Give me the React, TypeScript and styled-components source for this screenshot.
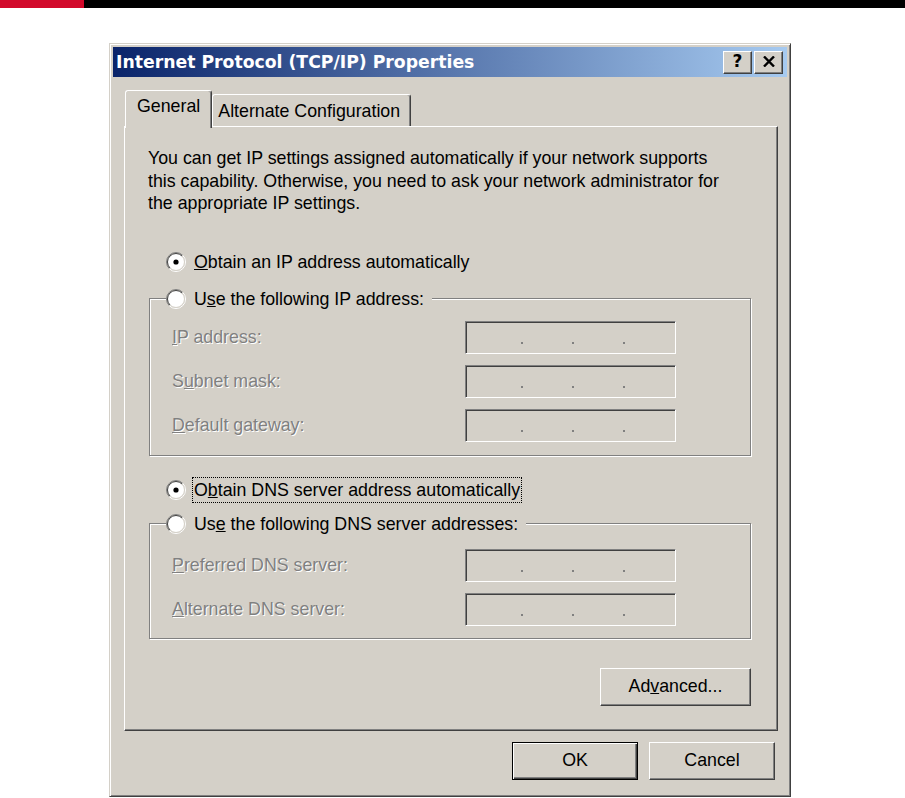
import React from "react";
import styled, { createGlobalStyle, css } from "styled-components";

const FACE = "#d4d0c8";
const SHADOW = "#808080";
const DARK = "#404040";

const GlobalStyle = createGlobalStyle`
  html, body { margin: 0; padding: 0; background: #fff; }
  body { font-family: "Liberation Sans", Arial, sans-serif; }
  * { box-sizing: border-box; }
`;

const raised = css`
  border: 1px solid;
  border-color: #fff ${DARK} ${DARK} #fff;
  box-shadow: inset -1px -1px 0 ${SHADOW};
`;

const Page = styled.div`
  width: 905px;
  height: 798px;
  overflow: hidden;
  background: #fff;
`;

const TopBar = styled.div`
  display: flex;
  height: 8px;
`;

const TopBarAccent = styled.div`
  width: 84px;
  background: #d20a2b;
`;

const TopBarRest = styled.div`
  flex: 1;
  background: #000;
`;

const Stage = styled.div`
  padding: 35px 0 0 109px;
`;

const Dialog = styled.div`
  width: 682px;
  background: ${FACE};
  border: 1px solid;
  border-color: ${FACE} ${DARK} ${DARK} ${FACE};
  box-shadow: inset 1px 1px 0 #fff, inset -1px -1px 0 ${SHADOW};
  padding: 3px;
`;

const TitleBar = styled.div`
  display: flex;
  align-items: center;
  height: 30px;
  padding: 0 4px 0 3px;
  background: linear-gradient(to right, #0a246a, #a6caf0);
`;

const TitleText = styled.div`
  flex: 1;
  font-family: "DejaVu Sans", Verdana, sans-serif;
  font-weight: bold;
  font-size: 17.25px;
  color: #fff;
  white-space: nowrap;
`;

const TitleButtons = styled.div`
  display: flex;
  gap: 2px;
`;

const CaptionButton = styled.div`
  ${raised};
  width: 29px;
  height: 23px;
  background: ${FACE};
  display: flex;
  align-items: center;
  justify-content: center;
  font-family: "DejaVu Sans", Verdana, sans-serif;
  font-weight: bold;
  font-size: 17px;
  line-height: 1;
  color: #000;
  padding-bottom: 1px;
`;

const Body = styled.div`
  padding: 13px 9px 0 11px;
`;

const TabStrip = styled.div`
  display: flex;
  align-items: flex-end;
  height: 36px;
  padding-left: 1px;
  position: relative;
  z-index: 1;
`;

const Tab = styled.div<{ $active?: boolean }>`
  border: 1px solid;
  border-bottom: none;
  border-color: #fff ${DARK} transparent #fff;
  box-shadow: inset -1px 0 0 ${SHADOW};
  border-radius: 3px 3px 0 0;
  background: ${FACE};
  font-size: 17.8px;
  line-height: 24px;
  color: #000;
  white-space: nowrap;
  height: ${(p) => (p.$active ? 38 : 32)}px;
  padding: ${(p) => (p.$active ? "3px 11px 0 11px" : "4px 10px 0 5px")};
  margin-bottom: ${(p) => (p.$active ? -2 : 0)}px;
  position: relative;
  z-index: ${(p) => (p.$active ? 2 : 1)};
`;

const Panel = styled.div`
  ${raised};
  padding: 20px 26px 24px 23px;
  display: flex;
  flex-direction: column;
`;

const Intro = styled.p`
  margin: 0;
  font-size: 17.8px;
  line-height: 22.5px;
  color: #000;
  white-space: nowrap;
`;

const OptionRow = styled.div<{ $top: number }>`
  display: flex;
  align-items: center;
  height: 24px;
  margin: ${(p) => p.$top}px 0 0 18px;
`;

const OptionLabel = styled.span<{ $focused?: boolean }>`
  font-size: 17.8px;
  line-height: 24px;
  color: #000;
  white-space: nowrap;
  padding: 0 1px;
  margin-left: 6px;
  border: 1px dotted ${(p) => (p.$focused ? "#000" : "transparent")};
`;

const Group = styled.div<{ $top: number; $bottom: number }>`
  display: flex;
  flex-direction: column;
  margin: ${(p) => p.$top}px 0 0 1px;
  padding: 0 74px ${(p) => p.$bottom}px 22px;
  border: 1px solid ${SHADOW};
  box-shadow: 1px 1px 0 #fff, inset 1px 1px 0 #fff;
`;

const Legend = styled.div`
  display: flex;
  align-items: center;
  align-self: flex-start;
  height: 24px;
  margin: -12px 0 0 -6px;
  padding-right: 6px;
  background: ${FACE};
`;

const Fields = styled.div<{ $top: number }>`
  display: flex;
  flex-direction: column;
  gap: 11px;
  margin-top: ${(p) => p.$top}px;
`;

const FieldRow = styled.div`
  display: flex;
  align-items: center;
  height: 33px;
`;

const FieldLabel = styled.span`
  flex: 1;
  font-size: 17.8px;
  color: ${SHADOW};
  text-shadow: 1px 1px 0 #fff;
  white-space: nowrap;
`;

const IpBox = styled.div`
  width: 211px;
  height: 33px;
  border: 1px solid;
  border-color: ${SHADOW} #fff #fff ${SHADOW};
  box-shadow: inset 1px 1px 0 ${DARK}, inset -1px -1px 0 ${FACE};
  background: ${FACE};
  display: flex;
  align-items: flex-end;
  gap: 49px;
  padding: 0 0 9px 55px;
`;

const IpDot = styled.span`
  width: 2px;
  height: 2px;
  background: ${SHADOW};
`;

const ButtonRow = styled.div<{ $top: number }>`
  display: flex;
  justify-content: flex-end;
  gap: 11px;
  margin-top: ${(p) => p.$top}px;
`;

const Footer = styled(ButtonRow)`
  padding: 0 3px 13px 0;
`;

const PushButton = styled.div<{ $width: number; $default?: boolean }>`
  width: ${(p) => p.$width}px;
  height: 38px;
  background: ${FACE};
  display: flex;
  align-items: center;
  justify-content: center;
  font-size: 17.8px;
  color: #000;
  white-space: nowrap;
  ${(p) =>
    p.$default
      ? css`
          border: 1px solid #000;
          box-shadow: inset 1px 1px 0 #fff, inset -1px -1px 0 ${DARK},
            inset -2px -2px 0 ${SHADOW};
        `
      : raised}
`;

const Radio: React.FC<{ checked?: boolean }> = ({ checked }) => {
  const c = 10;
  const arc = (r: number, first: boolean) => {
    const d = r * Math.SQRT1_2;
    return first
      ? `M ${c - d} ${c + d} A ${r} ${r} 0 0 1 ${c + d} ${c - d}`
      : `M ${c + d} ${c - d} A ${r} ${r} 0 0 1 ${c - d} ${c + d}`;
  };
  return (
    <svg width="20" height="20" viewBox="0 0 20 20" style={{ flex: "none" }}>
      <circle cx={c} cy={c} r={8.5} fill="#fff" />
      <path d={arc(9.5, true)} stroke={SHADOW} strokeWidth="1" fill="none" />
      <path d={arc(9.5, false)} stroke="#fff" strokeWidth="1" fill="none" />
      <path d={arc(8.5, true)} stroke={DARK} strokeWidth="1" fill="none" />
      <path d={arc(8.5, false)} stroke={FACE} strokeWidth="1" fill="none" />
      {checked && <circle cx={c} cy={c} r={2.6} fill="#000" />}
    </svg>
  );
};

const Field: React.FC<{ label: React.ReactNode }> = ({ label }) => (
  <FieldRow>
    <FieldLabel>{label}</FieldLabel>
    <IpBox>
      <IpDot />
      <IpDot />
      <IpDot />
    </IpBox>
  </FieldRow>
);

export default function App() {
  return (
    <Page>
      <GlobalStyle />
      <TopBar>
        <TopBarAccent />
        <TopBarRest />
      </TopBar>
      <Stage>
        <Dialog>
          <TitleBar>
            <TitleText>Internet Protocol (TCP/IP) Properties</TitleText>
            <TitleButtons>
              <CaptionButton>?</CaptionButton>
              <CaptionButton>
                <svg width="12" height="11" viewBox="0 0 12 11">
                  <path d="M1 0.5 L11 10.5 M11 0.5 L1 10.5" stroke="#000" strokeWidth="2.4" />
                </svg>
              </CaptionButton>
            </TitleButtons>
          </TitleBar>
          <Body>
            <TabStrip>
              <Tab $active>General</Tab>
              <Tab>Alternate Configuration</Tab>
            </TabStrip>
            <Panel>
              <Intro>
                You can get IP settings assigned automatically if your network supports
                <br />
                this capability. Otherwise, you need to ask your network administrator for
                <br />
                the appropriate IP settings.
              </Intro>
              <OptionRow $top={35}>
                <Radio checked />
                <OptionLabel>
                  <u>O</u>btain an IP address automatically
                </OptionLabel>
              </OptionRow>
              <Group $top={24} $bottom={13}>
                <Legend>
                  <Radio />
                  <OptionLabel>
                    U<u>s</u>e the following IP address:
                  </OptionLabel>
                </Legend>
                <Fields $top={10}>
                  <Field label={<><u>I</u>P address:</>} />
                  <Field label={<>S<u>u</u>bnet mask:</>} />
                  <Field label={<><u>D</u>efault gateway:</>} />
                </Fields>
              </Group>
              <OptionRow $top={22}>
                <Radio checked />
                <OptionLabel $focused>
                  O<u>b</u>tain DNS server address automatically
                </OptionLabel>
              </OptionRow>
              <Group $top={21} $bottom={12}>
                <Legend>
                  <Radio />
                  <OptionLabel>
                    Us<u>e</u> the following DNS server addresses:
                  </OptionLabel>
                </Legend>
                <Fields $top={13}>
                  <Field label={<><u>P</u>referred DNS server:</>} />
                  <Field label={<><u>A</u>lternate DNS server:</>} />
                </Fields>
              </Group>
              <ButtonRow $top={29}>
                <PushButton $width={151}>
                  Ad<u>v</u>anced...
                </PushButton>
              </ButtonRow>
            </Panel>
            <Footer $top={11}>
              <PushButton $width={126} $default>
                OK
              </PushButton>
              <PushButton $width={126}>Cancel</PushButton>
            </Footer>
          </Body>
        </Dialog>
      </Stage>
    </Page>
  );
}
